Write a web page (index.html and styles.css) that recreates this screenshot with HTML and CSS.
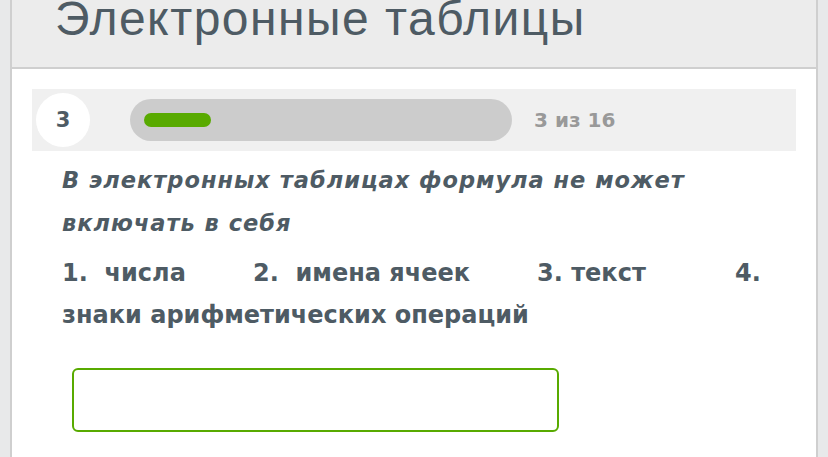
FILE: index.html
```html
<!DOCTYPE html>
<html lang="ru">
<head>
    <meta charset="UTF-8">
    <meta name="viewport" content="width=device-width, initial-scale=1.0">
    <title>Электронные таблицы</title>
    <link rel="stylesheet" href="styles.css">
</head>
<body>
    <div class="page">
        <div class="header">
            <h1>Электронные таблицы</h1>
        </div>

        <div class="content">
            <div class="progress">
                <div class="num">3</div>
                <div class="track">
                    <div class="fill"></div>
                </div>
                <div class="counter">3 из 16</div>
            </div>

            <p class="question">В электронных таблицах формула не может включать в себя</p>
            <p class="options">
                <span class="opt opt-1">1.&nbsp; числа</span><span class="opt opt-2">2.&nbsp; имена ячеек</span><span class="opt opt-3">3. текст</span>4. знаки арифметических операций
            </p>

            <input type="text" class="answer">
        </div>
    </div>
</body>
</html>
```

FILE: styles.css
```css
body {
    font-family: "Liberation Sans", Arial, sans-serif;
    background-color: #e8e9ea;
    margin: 0;
    padding: 0;
    color: #4e5b64;
}

.page {
    margin: 0 10px;
    min-height: 457px;
    background-color: #fff;
    border-left: 2px solid #cfcfcf;
    border-right: 2px solid #cfcfcf;
}

.header {
    height: 67px;
    background-color: #ececec;
    border-bottom: 2px solid #cfcfcf;
    padding-left: 43px;
    overflow: hidden;
}

.header h1 {
    margin: -5px 0 0;
    font-size: 48px;
    line-height: 48px;
    letter-spacing: 1.5px;
    font-weight: normal;
    color: #4e5b64;
}

.content {
    padding: 20px 20px 0;
}

.progress {
    display: flex;
    align-items: center;
    height: 62px;
    padding: 0 4px;
    background-color: #f0f0f0;
}

.num {
    width: 54px;
    height: 54px;
    border-radius: 50%;
    background-color: #fff;
    display: flex;
    align-items: center;
    justify-content: center;
    font-family: "DejaVu Sans", sans-serif;
    font-size: 21px;
    font-weight: bold;
}

.track {
    display: flex;
    align-items: center;
    width: 382px;
    height: 42px;
    margin-left: 40px;
    padding-left: 14px;
    box-sizing: border-box;
    border-radius: 21px;
    background-color: #cccccc;
}

.fill {
    width: 67px;
    height: 14px;
    border-radius: 7px;
    background-color: #58aa00;
}

.counter {
    margin-left: 22px;
    font-family: "DejaVu Sans", sans-serif;
    font-size: 20px;
    font-weight: bold;
    color: #999;
}

.question,
.options {
    margin: 0;
    padding: 0 20px 0 30px;
    font-family: "DejaVu Sans", sans-serif;
    font-weight: bold;
}

.question {
    margin-top: 8px;
    padding-right: 50px;
    font-size: 22.5px;
    line-height: 43px;
    letter-spacing: 1px;
    font-style: italic;
}

.options {
    margin-top: 7px;
    font-size: 24px;
    line-height: 42px;
}

.opt {
    display: inline-block;
}

.opt-1 {
    width: 191px;
}

.opt-2 {
    width: 284px;
}

.opt-3 {
    width: 198px;
}

.answer {
    display: block;
    margin: 32px 0 0 40px;
    width: 487px;
    height: 64px;
    box-sizing: border-box;
    border: 2px solid #58aa00;
    border-radius: 6px;
    outline: none;
    background-color: #fff;
}
```
